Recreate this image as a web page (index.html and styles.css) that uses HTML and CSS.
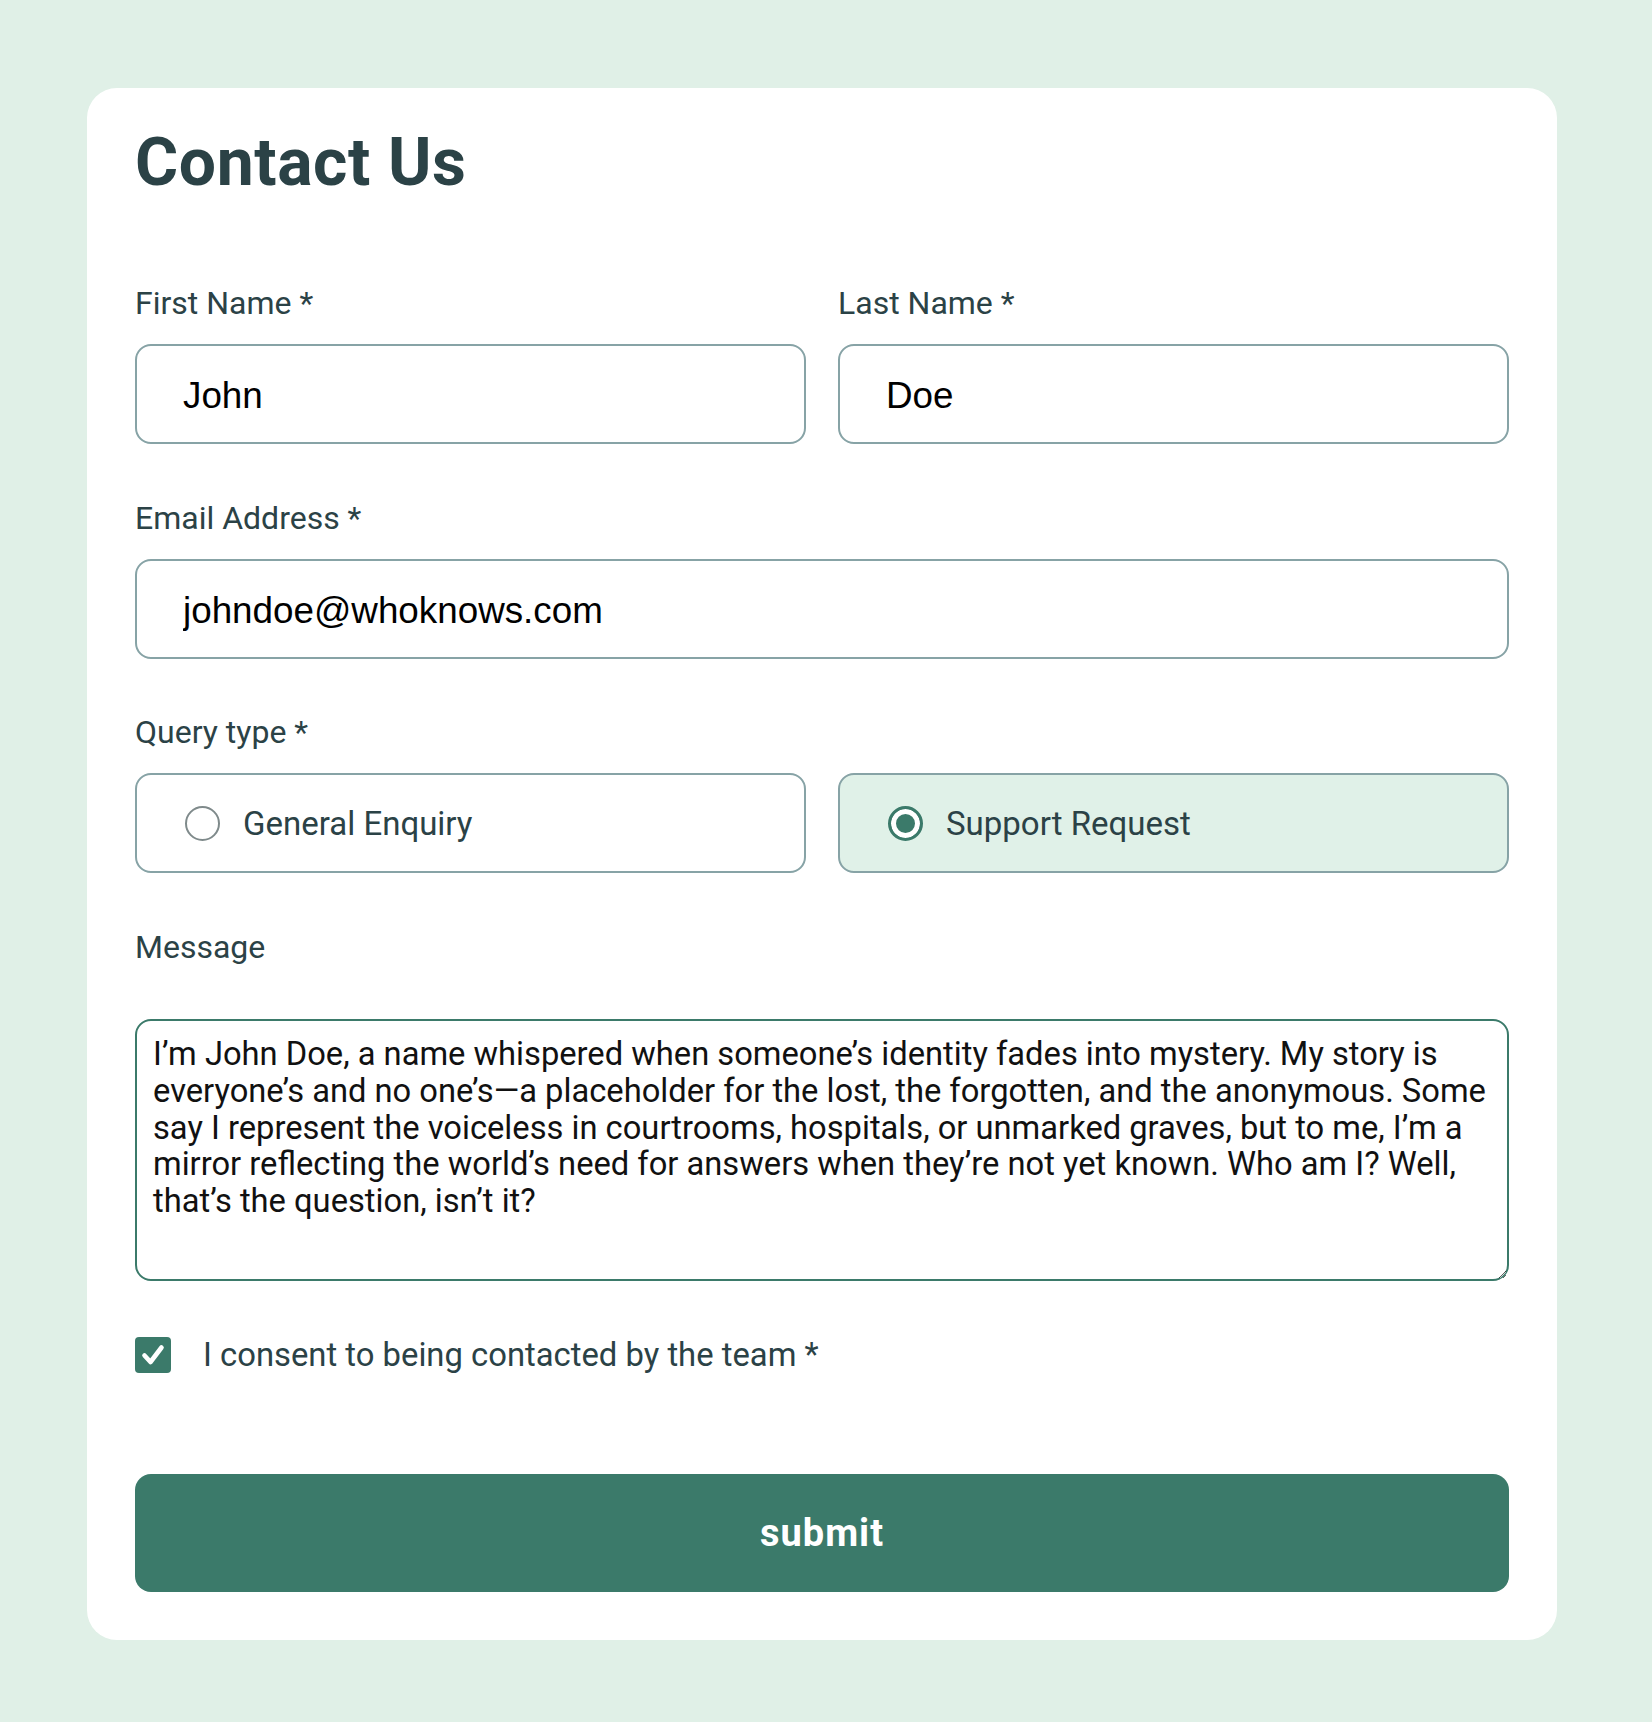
FILE: index.html
```html
<!DOCTYPE html>
<html lang="en">
<head>
<meta charset="utf-8">
<title>Contact Us</title>
<link rel="stylesheet" href="styles.css">
</head>
<body>
<main class="card">
  <h1 class="title">Contact Us</h1>
  <form class="form">
    <div class="row two">
      <div class="field">
        <label class="label" for="fn">First Name *</label>
        <input class="input" id="fn" type="text" value="John">
      </div>
      <div class="field">
        <label class="label" for="ln">Last Name *</label>
        <input class="input" id="ln" type="text" value="Doe">
      </div>
    </div>
    <div class="field gap-top">
      <label class="label" for="em">Email Address *</label>
      <input class="input" id="em" type="email" value="johndoe@whoknows.com">
    </div>
    <div class="field gap-top-q">
      <span class="label">Query type *</span>
      <div class="row two">
        <label class="choice">
          <input class="radio" type="radio" name="q">
          <span class="choice-text">General Enquiry</span>
        </label>
        <label class="choice selected">
          <input class="radio" type="radio" name="q" checked>
          <span class="choice-text">Support Request</span>
        </label>
      </div>
    </div>
    <div class="field gap-top msg">
      <label class="label" for="msg">Message</label>
      <textarea class="textarea" id="msg">I’m John Doe, a name whispered when someone’s identity fades into mystery. My story is
everyone’s and no one’s—a placeholder for the lost, the forgotten, and the anonymous. Some
say I represent the voiceless in courtrooms, hospitals, or unmarked graves, but to me, I’m a
mirror reflecting the world’s need for answers when they’re not yet known. Who am I? Well,
that’s the question, isn’t it?</textarea>
    </div>
    <label class="consent">
      <span class="check">
        <svg viewBox="0 0 36 36" width="36" height="36" aria-hidden="true"><path d="M9.5 18.5 L15.5 25 L26.5 10.5" fill="none" stroke="#fff" stroke-width="4.6" stroke-linecap="round" stroke-linejoin="round"/></svg>
      </span>
      <span class="consent-text">I consent to being contacted by the team *</span>
    </label>
    <button class="submit" type="button">submit</button>
  </form>
</main>
</body>
</html>
```

FILE: styles.css
```css
* { box-sizing: border-box; }

body {
  margin: 0;
  min-height: 1722px;
  background: #e0f0e7;
  padding: 88px 0 0 87px;
  font-family: Roboto, "Liberation Sans", sans-serif;
  color: #2b4246;
}

.card {
  width: 1470px;
  background: #fff;
  border-radius: 30px;
  padding: 42px 48px 48px;
}

.title {
  margin: 0;
  font-size: 66px;
  line-height: 66px;
  font-weight: 700;
  letter-spacing: 0.6px;
  color: #2b4246;
}

.form {
  margin-top: 91px;
  display: flex;
  flex-direction: column;
}

.row.two {
  display: grid;
  grid-template-columns: 1fr 1fr;
  gap: 32px;
}

.field {
  display: flex;
  flex-direction: column;
}

.gap-top { margin-top: 58px; }
.gap-top-q { margin-top: 57px; }

.label {
  display: block;
  font-size: 32px;
  line-height: 32px;
  color: #2b4246;
  margin-bottom: 25px;
}

.msg .label { margin-bottom: 56px; }

.input {
  height: 100px;
  border: 2px solid #87a3a6;
  border-radius: 16px;
  padding: 4px 46px 0;
  font-family: "Liberation Sans", Arial, sans-serif;
  font-size: 36.8px;
  color: #000;
  background: #fff;
  outline: none;
  width: 100%;
}

.choice {
  height: 100px;
  border: 2px solid #87a3a6;
  border-radius: 16px;
  padding: 0 46px 0 48px;
  display: flex;
  align-items: center;
  gap: 23px;
  background: #fff;
}

.choice.selected { background: #e0f1e8; }

.radio {
  appearance: none;
  -webkit-appearance: none;
  margin: 0;
  width: 35px;
  height: 35px;
  border-radius: 50%;
  border: 2px solid #7f8a8b;
  background: #fff;
  flex: none;
}

.radio:checked {
  border: 3px solid #3b7a6a;
  background: #3b7a6a;
  box-shadow: inset 0 0 0 5px #fff;
}

.choice-text {
  font-size: 33px;
  color: #2b4246;
}

.textarea {
  height: 262px;
  width: 100%;
  border: 2px solid #3b7a6a;
  border-radius: 16px;
  padding: 15px 17px 0 16px;
  font-family: Roboto, "Liberation Sans", sans-serif;
  font-size: 32.7px;
  line-height: 36.8px;
  color: #111;
  white-space: pre;
  overflow: hidden;
  outline: none;
}

.consent {
  margin-top: 56px;
  display: flex;
  align-items: center;
  gap: 32px;
  height: 36px;
}

.check {
  width: 36px;
  height: 36px;
  border-radius: 4px;
  background: #3b7a6a;
  display: block;
  flex: none;
}

.check svg { display: block; }

.consent-text {
  font-size: 32.8px;
  color: #2b4246;
}

.submit {
  margin-top: 101px;
  height: 118px;
  width: 100%;
  border: none;
  border-radius: 16px;
  background: #3b7a6a;
  color: #fff;
  font-family: Roboto, "Liberation Sans", sans-serif;
  font-weight: 700;
  font-size: 38px;
  letter-spacing: 1px;
}
```
